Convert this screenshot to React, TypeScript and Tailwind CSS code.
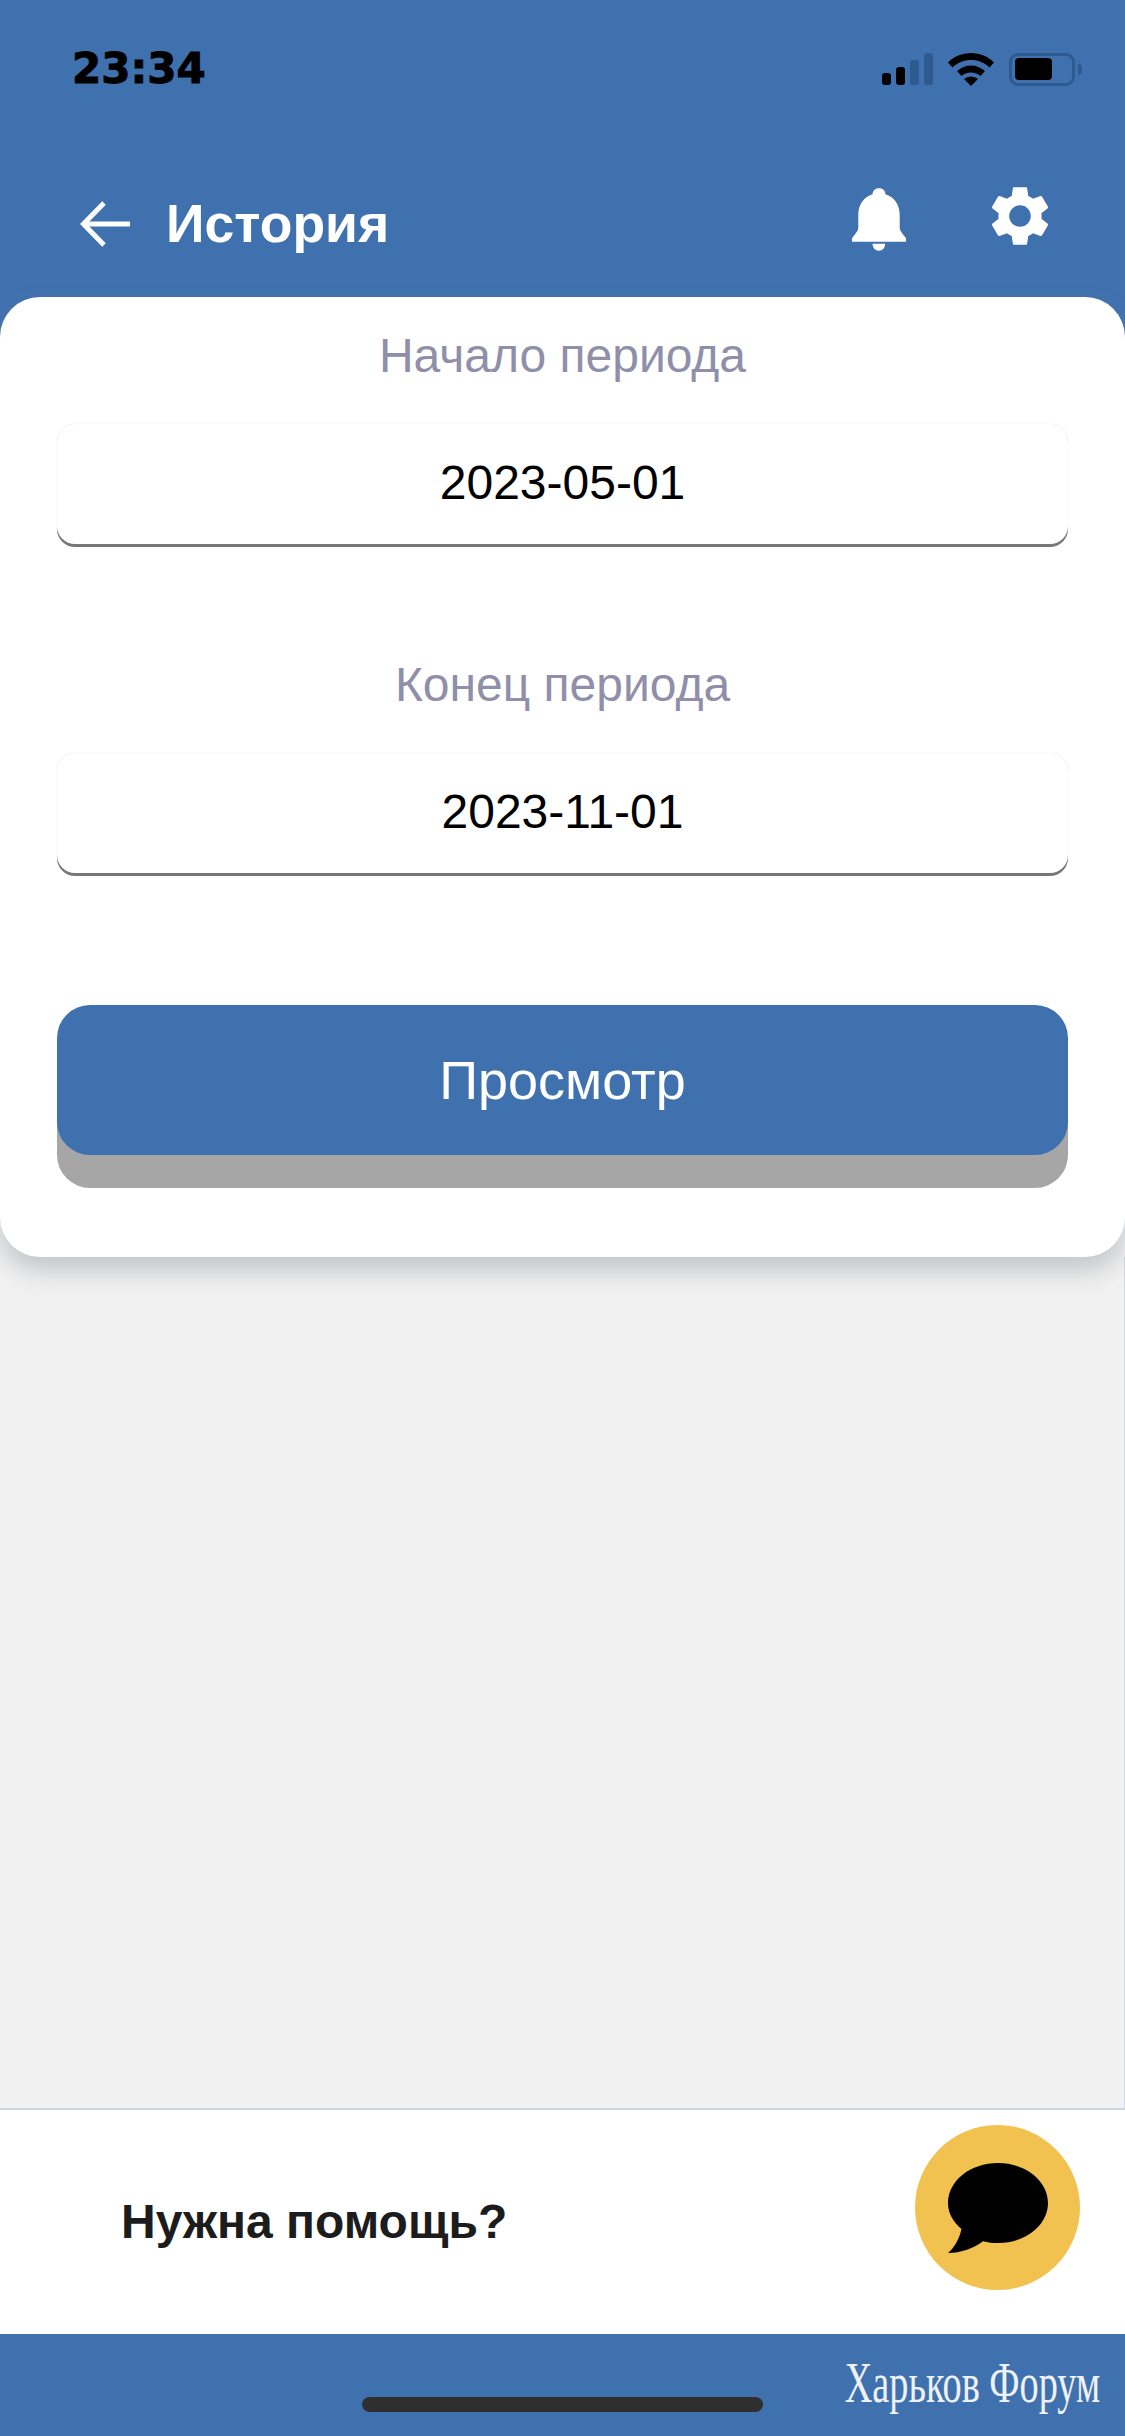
const SANS = "font-['Liberation_Sans',Arial,sans-serif]";

function Signal() {
  return (
    <div className="flex items-end gap-[5px]">
      <div className="h-[12px] w-[9px] rounded-[3px] bg-black" />
      <div className="h-[18px] w-[9px] rounded-[3px] bg-black" />
      <div className="h-[25px] w-[9px] rounded-[3px] bg-[#2f5a90]" />
      <div className="h-[32px] w-[9px] rounded-[3px] bg-[#2f5a90]" />
    </div>
  );
}

function Wifi() {
  return (
    <svg width="46" height="33" viewBox="0 0 46 33">
      <path d="M0 9.5C6 3.5 14 0 23 0s17 3.500 23 9.500l-4.500 5C36.500 9.500 30 7 23 7S9.500 9.500 4.500 14.500z" fill="#000" />
      <path d="M9 18c4-3.500 9-5.500 14-5.500S33 14.500 37 18l-4.500 5c-2.500-2.200-6-3.500-9.500-3.500S16 20.800 13.500 23z" fill="#000" />
      <path d="M16 26c2-1.600 4.500-2.500 7-2.500s5 .9 7 2.500l-7 7z" fill="#000" />
    </svg>
  );
}

function Battery() {
  return (
    <div className="flex items-center gap-[3px]">
      <div className="flex h-[33px] w-[66px] items-center rounded-[9px] border-[3px] border-[#2f5a90] p-[3px]">
        <div className="h-[22px] w-[37px] rounded-[4px] bg-black" />
      </div>
      <div className="h-[11px] w-[4px] rounded-r-[4px] bg-[#2f5a90]" />
    </div>
  );
}

function BackArrow() {
  return (
    <svg width="50" height="46" viewBox="0 0 50 46" fill="none" stroke="#fff" strokeWidth="5">
      <path d="M50 23H4" />
      <path d="M24 2L3.500 23 24 44" />
    </svg>
  );
}

function Bell() {
  return (
    <svg width="54" height="63" viewBox="0 0 163 189" fill="#fff">
      <path d="M81 0c-11 0-19 8-19 18-25 8-43 30-43 62v38c0 12-8 18-19 33v11h163v-11c-11-15-19-21-19-33V80c0-32-18-54-43-62 0-10-8-18-19-18z" />
      <path d="M62 168h38c0 12-8 21-19 21s-19-9-19-21z" />
    </svg>
  );
}

function Gear() {
  return (
    <svg width="72" height="72" viewBox="0 0 24 24" fill="#fff">
      <path d="M19.140 12.940c.04-.3.06-.61.06-.94 0-.32-.02-.64-.07-.94l2.030-1.580c.18-.14.23-.41.12-.61l-1.920-3.320c-.12-.22-.37-.29-.59-.22l-2.390.96c-.5-.38-1.030-.7-1.620-.94l-.36-2.540c-.04-.24-.24-.41-.48-.41h-3.840c-.24 0-.43.17-.47.41l-.36 2.540c-.59.24-1.130.57-1.620.94l-2.390-.96c-.22-.08-.47 0-.59.22L2.740 8.870c-.12.21-.08.47.12.61l2.030 1.580c-.05.3-.09.63-.09.94s.02.64.07.94l-2.030 1.580c-.18.14-.23.41-.12.61l1.920 3.320c.12.22.37.29.59.22l2.390-.96c.5.38 1.030.7 1.620.94l.36 2.540c.05.24.24.41.48.41h3.840c.24 0 .44-.17.47-.41l.36-2.540c.59-.24 1.130-.56 1.620-.94l2.390.96c.22.08.47 0 .59-.22l1.920-3.320c.12-.22.07-.47-.12-.61l-2.010-1.580zM12 15.600c-1.980 0-3.600-1.620-3.600-3.600s1.620-3.600 3.600-3.600 3.600 1.620 3.600 3.600-1.620 3.600-3.600 3.600z" />
    </svg>
  );
}

function Bubble() {
  return (
    <svg width="100" height="90" viewBox="0 0 100 90" fill="#000">
      <path d="M50 0c27.600 0 50 17.800 50 40S77.600 80 50 80c-5 0-10-.5-15-1.800C26 85 13 90 0 90c6-5 11-13 13.500-24C5 58.800 0 49.800 0 40 0 17.800 22.400 0 50 0z" />
    </svg>
  );
}

function DateField({ label, value, top }: { label: string; value: string; top: string }) {
  return (
    <div className={`flex flex-col ${top}`}>
      <div className="text-center text-[48px] leading-[52px] text-[#8f8fa9]">{label}</div>
      <div className="mt-[42px] flex h-[120px] items-center justify-center rounded-[18px] bg-white pb-[3px] text-[48px] text-black shadow-[0_3px_0_#777777,0_0_1px_#cfcfcf]">
        {value}
      </div>
    </div>
  );
}

export default function App() {
  return (
    <div className={`flex h-[2436px] w-[1125px] flex-col overflow-hidden bg-[#f1f1f1] ${SANS}`}>
      <header className="flex h-[337px] shrink-0 flex-col bg-[#4071af] pl-[72px] pr-[43px] pt-[44px]">
        <div className="flex h-[50px] items-center justify-between">
          <span className="font-['DejaVu_Sans',sans-serif] text-[42px] font-bold leading-none text-black [-webkit-text-stroke:1px_black]">23:34</span>
          <div className="flex items-center gap-[15px]">
            <Signal />
            <Wifi />
            <Battery />
          </div>
        </div>
        <div className="mt-[86px] flex items-center">
          <div className="ml-[8px]"><BackArrow /></div>
          <h1 className="ml-[36px] text-[53.5px] font-bold leading-none text-white">История</h1>
          <div className="ml-auto mr-[26px] mb-[16px] flex items-center gap-[78px]">
            <div className="mt-[6px]"><Bell /></div>
            <Gear />
          </div>
        </div>
      </header>

      <section className="relative z-10 -mt-[40px] flex h-[960px] shrink-0 flex-col rounded-[40px] bg-white px-[57px] pt-[33px] shadow-[0_14px_24px_rgba(130,135,145,0.4)]">
        <DateField label="Начало периода" value="2023-05-01" top="" />
        <DateField label="Конец периода" value="2023-11-01" top="mt-[115px]" />
        <button className="mt-[132px] h-[150px] shrink-0 rounded-[33px] bg-[#4071af] text-[54px] text-white shadow-[0_33px_0_#a6a6a6]">
          Просмотр
        </button>
      </section>

      <main className="flex-1 border-r border-[#d5d8e4]" />

      <section className="flex h-[226px] shrink-0 items-center border-t-2 border-[#d0d3e0] bg-white pl-[121px] pr-[45px]">
        <span className="text-[48px] font-bold text-[#1c1c1c]">Нужна помощь?</span>
        <div className="ml-auto -mt-[29px] flex h-[165px] w-[165px] items-center justify-center rounded-full bg-[#f2c251]">
          <Bubble />
        </div>
      </section>

      <footer className="relative flex h-[102px] shrink-0 items-start justify-end bg-[#4071af] pr-[25px] pt-[16px]">
        <span className="origin-right scale-x-[0.66] whitespace-nowrap font-['Liberation_Serif',serif] text-[58px] leading-[66px] text-[#eef2f8]">Харьков Форум</span>
        <div className="absolute left-[362px] top-[63px] h-[15px] w-[401px] rounded-full bg-[#2f2f2f]" />
      </footer>
    </div>
  );
}
